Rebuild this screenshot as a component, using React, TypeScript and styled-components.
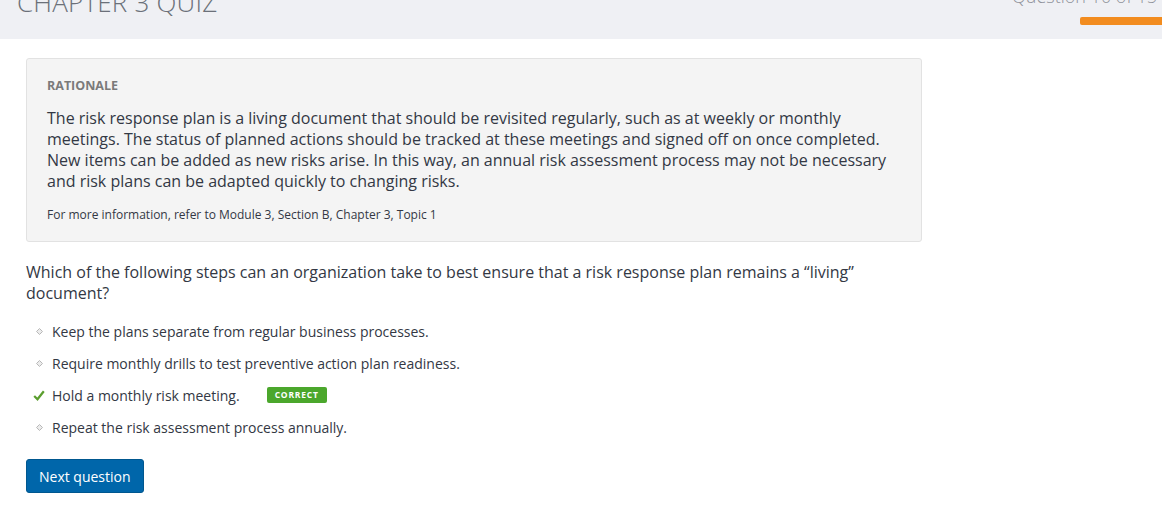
import styled, { createGlobalStyle } from "styled-components";

const Global = createGlobalStyle`
  html, body {
    margin: 0;
    padding: 0;
    background: #ffffff;
    overflow: hidden;
  }
  body {
    font-family: "Open Sans", "Liberation Sans", sans-serif;
    color: #333844;
  }
`;

const options = [
  { text: "Keep the plans separate from regular business processes.", correct: false },
  { text: "Require monthly drills to test preventive action plan readiness.", correct: false },
  { text: "Hold a monthly risk meeting.", correct: true },
  { text: "Repeat the risk assessment process annually.", correct: false },
];

const CheckIcon = () => (
  <svg width="12" height="11" viewBox="0 0 12 11">
    <path d="M1.2 6 L4.5 9.3 L10.8 1.2" fill="none" stroke="#5b9e2e" strokeWidth="2.2" />
  </svg>
);

const DiamondIcon = () => (
  <svg width="7" height="7" viewBox="0 0 7 7">
    <path d="M3.5 0.5 L6.5 3.5 L3.5 6.5 L0.5 3.5 Z" fill="#ececec" stroke="#b8b8b8" strokeWidth="1" />
  </svg>
);

const App = () => {
  return (
    <Page>
      <Global />
      <Header>
        <Title>CHAPTER 3 QUIZ</Title>
        <Progress>
          <Counter>Question 10 of 15 · 7</Counter>
          <Bar />
        </Progress>
      </Header>
      <Main>
        <Rationale>
          <Label>RATIONALE</Label>
          <RationaleText>
            The risk response plan is a living document that should be revisited regularly, such as at weekly or monthly
            meetings. The status of planned actions should be tracked at these meetings and signed off on once completed.
            New items can be added as new risks arise. In this way, an annual risk assessment process may not be necessary
            and risk plans can be adapted quickly to changing risks.
          </RationaleText>
          <Reference>For more information, refer to Module 3, Section B, Chapter 3, Topic 1</Reference>
        </Rationale>
        <Question>
          Which of the following steps can an organization take to best ensure that a risk response plan remains a “living”
          document?
        </Question>
        <Options>
          {options.map((o) => (
            <Option key={o.text}>
              <Marker>{o.correct ? <CheckIcon /> : <DiamondIcon />}</Marker>
              <span>{o.text}</span>
              {o.correct && <Badge>CORRECT</Badge>}
            </Option>
          ))}
        </Options>
        <NextButton>Next question</NextButton>
      </Main>
    </Page>
  );
};

const Page = styled.div`
  width: 1162px;
  height: 506px;
  overflow: hidden;
`;

const Header = styled.header`
  height: 39px;
  background: #eff0f4;
  display: flex;
  justify-content: space-between;
  align-items: flex-start;
  overflow: hidden;
`;

const Title = styled.h1`
  margin: -13px 0 0 17px;
  font-size: 26px;
  line-height: 30px;
  font-weight: 300;
  color: #6b7079;
  letter-spacing: 0.2px;
`;

const Progress = styled.div`
  width: 230px;
  flex-shrink: 0;
  margin-right: -80px;
  display: flex;
  flex-direction: column;
`;

const Counter = styled.div`
  margin-top: -15px;
  height: 20px;
  font-size: 18px;
  line-height: 22px;
  font-weight: 300;
  color: #8f939b;
  white-space: nowrap;
`;

const Bar = styled.div`
  margin: 12px 0 0 68px;
  height: 8px;
  border-radius: 2px;
  background: #f28c1f;
`;

const Main = styled.main`
  padding: 19px 26px 0 26px;
`;

const Rationale = styled.section`
  width: 854px;
  padding: 19px 20px 18px 20px;
  background: #f4f4f4;
  border: 1px solid #e2e2e2;
  border-radius: 3px;
`;

const Label = styled.div`
  font-size: 12.5px;
  font-weight: 700;
  color: #7a7a7a;
  line-height: 16px;
`;

const RationaleText = styled.p`
  margin: 14px 0 0 0;
  font-size: 16px;
  line-height: 21px;
  color: #333844;
`;

const Reference = styled.p`
  margin: 15px 0 0 0;
  font-size: 12px;
  line-height: 16px;
  color: #333844;
`;

const Question = styled.p`
  margin: 20px 0 0 0;
  width: 860px;
  font-size: 16px;
  line-height: 21px;
  color: #333844;
`;

const Options = styled.ul`
  list-style: none;
  margin: 17px 0 0 0;
  padding: 0;
  display: flex;
  flex-direction: column;
  gap: 12px;
`;

const Option = styled.li`
  display: flex;
  align-items: center;
  height: 20px;
  font-size: 14px;
  color: #333844;
`;

const Marker = styled.span`
  width: 26px;
  flex-shrink: 0;
  display: flex;
  align-items: center;
  justify-content: center;
`;

const Badge = styled.span`
  margin-left: 27px;
  padding: 0 8px;
  height: 16px;
  line-height: 16px;
  border-radius: 2px;
  background: #4ba72c;
  color: #ffffff;
  font-size: 8.5px;
  font-weight: 700;
  letter-spacing: 0.8px;
`;

const NextButton = styled.button`
  margin-top: 22px;
  height: 34px;
  padding: 0 12px;
  background: #0066aa;
  border: 1px solid #00578f;
  border-radius: 3px;
  color: #ffffff;
  font-family: "Open Sans", "Liberation Sans", sans-serif;
  font-size: 14px;
  cursor: pointer;
`;

export default App;
